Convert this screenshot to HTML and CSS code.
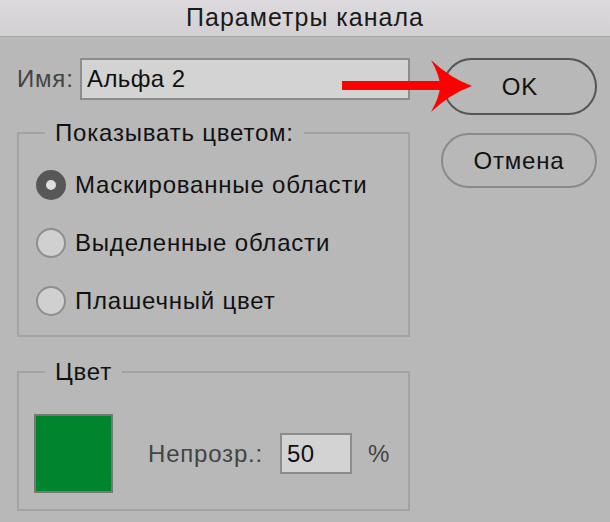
FILE: index.html
```html
<!DOCTYPE html>
<html lang="ru">
<head>
    <meta charset="UTF-8">
    <meta name="viewport" content="width=device-width, initial-scale=1.0">
    <title>Параметры канала</title>
    <link rel="stylesheet" href="styles.css">
</head>
<body>
    <div class="dialog">
        <div class="titlebar">Параметры канала</div>

        <div class="dialog-body">
            <div class="main">
                <div class="name-row">
                    <label class="name-label" for="name">Имя:</label>
                    <input class="field name-field" type="text" id="name" value="Альфа 2">
                </div>

                <fieldset class="group group-show">
                    <legend>Показывать цветом:</legend>
                    <label class="radio"><span class="dot checked"></span>Маскированные области</label>
                    <label class="radio"><span class="dot"></span>Выделенные области</label>
                    <label class="radio"><span class="dot"></span>Плашечный цвет</label>
                </fieldset>

                <fieldset class="group group-color">
                    <legend>Цвет</legend>
                    <div class="color-row">
                        <div class="swatch"></div>
                        <label class="muted opacity-label" for="opacity">Непрозр.:</label>
                        <input class="field opacity-field" type="text" id="opacity" value="50">
                        <span class="muted percent">%</span>
                    </div>
                </fieldset>
            </div>

            <div class="buttons">
                <button class="btn btn-ok">OK</button>
                <button class="btn btn-cancel">Отмена</button>
            </div>
        </div>

        <!-- стрелка-указатель поверх диалога -->
        <svg class="arrow" width="136" height="60" viewBox="0 0 136 60">
            <rect x="2" y="25" width="100" height="9" fill="#ff0000"/>
            <path d="M91 4 Q110 22 132 30 Q110 38 91 56 Q100 40 100 30 Q100 20 91 4 Z" fill="#ff0000"/>
        </svg>
    </div>
</body>
</html>
```

FILE: styles.css
```css
body {
    margin: 0;
    padding: 0;
    font-family: "Liberation Sans", Arial, sans-serif;
    background-color: #b8b8b8;
    color: #111;
}

.dialog {
    position: relative;
    width: 610px;
    height: 522px;
    overflow: hidden;
    background-color: #b8b8b8;
    font-size: 24px;
    letter-spacing: 0.8px;
}

.titlebar {
    height: 36px;
    line-height: 35px;
    text-align: center;
    font-size: 25px;
    letter-spacing: 1px;
    color: #1a1a1a;
    background: linear-gradient(#dcdadc, #d2d0d2);
    border-bottom: 1px solid #a6a6a6;
}

.dialog-body {
    display: flex;
    padding: 21px 13px 0 17px;
}

.main {
    width: 393px;
}

.name-row {
    display: flex;
    align-items: center;
    height: 42px;
}

.name-label {
    width: 63px;
    color: #444;
}

.field {
    box-sizing: border-box;
    height: 42px;
    padding: 0 5px;
    border: 2px solid #8c8c8c;
    background-color: #d3d3d3;
    font-family: inherit;
    font-size: 24px;
    letter-spacing: 0.4px;
    color: #111;
    border-radius: 0;
    outline: none;
}

.name-field {
    width: 330px;
}

.group {
    margin: 0;
    border: 2px solid #a3a3a3;
    min-width: 0;
}

.group legend {
    line-height: 26px;
    padding: 0 10px;
}

.group-show {
    margin-top: 20px;
    padding: 10px 17px 5px 17px;
}

.group-show legend {
    margin-left: 9px;
}

.radio {
    display: flex;
    align-items: center;
    height: 58px;
}

.dot {
    box-sizing: border-box;
    width: 30px;
    height: 30px;
    margin-right: 9px;
    border-radius: 50%;
    border: 2px solid #8e8e8e;
    background-color: #d0d0d0;
}

.dot.checked {
    border: 10px solid #575757;
    background-color: #dedede;
}

.group-color {
    margin-top: 22px;
    padding: 29px 15px 16px 15px;
}

.group-color legend {
    margin-left: 11px;
}

.color-row {
    display: flex;
    align-items: center;
}

.swatch {
    box-sizing: border-box;
    width: 79px;
    height: 79px;
    border: 2px solid #777;
    background-color: #00852f;
}

.muted {
    color: #444;
}

.opacity-label {
    margin-left: 35px;
    margin-right: 17px;
}

.opacity-field {
    width: 72px;
    height: 41px;
}

.percent {
    margin-left: 16px;
}

.buttons {
    display: flex;
    flex-direction: column;
    margin-left: 31px;
}

.btn {
    box-sizing: border-box;
    width: 156px;
    background: transparent;
    border-radius: 30px;
    font-family: inherit;
    font-size: 24px;
    letter-spacing: 0.8px;
    color: #111;
    padding: 0;
}

.btn-ok {
    height: 57px;
    margin-left: 2px;
    width: 154px;
    border: 2px solid #555;
}

.btn-cancel {
    height: 55px;
    margin-top: 18px;
    border: 2px solid #8a8a8a;
}

.arrow {
    position: absolute;
    left: 340px;
    top: 56px;
}
```
